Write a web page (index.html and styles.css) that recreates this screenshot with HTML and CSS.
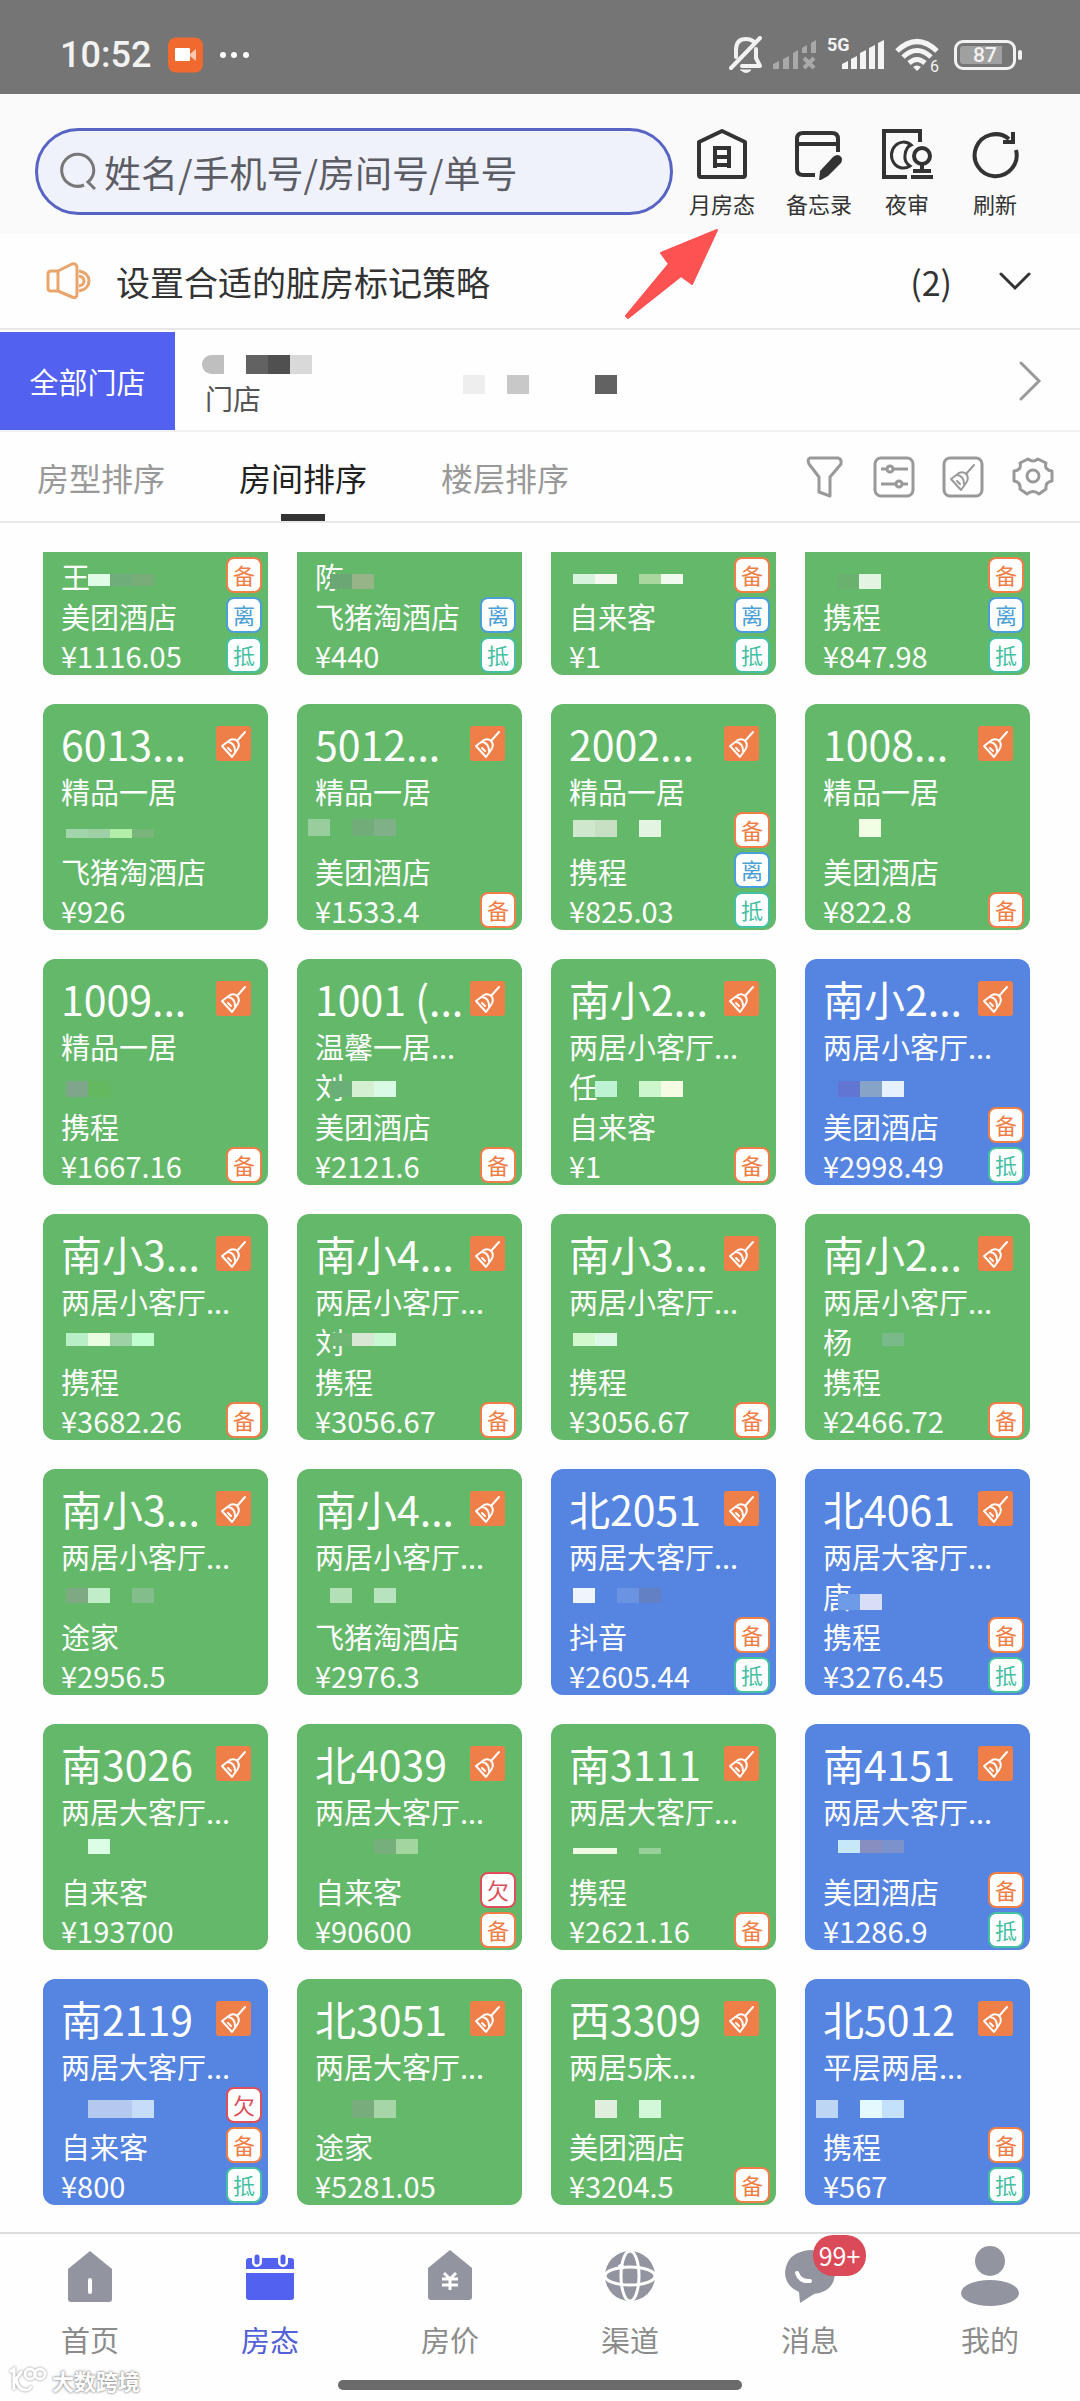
FILE: index.html
```html
<!DOCTYPE html>
<html lang="zh-CN">
<head>
  <meta charset="UTF-8">
  <meta name="viewport" content="width=device-width, initial-scale=1.0">
  <title>房态</title>
  <link rel="stylesheet" href="styles.css">
</head>
<body>

  <!-- 共用图标 -->
  <svg class="defs" width="0" height="0" aria-hidden="true">
    <symbol id="broom" viewBox="0 0 35 35">
      <g fill="none" stroke="currentColor" stroke-width="2" stroke-linecap="round" stroke-linejoin="round">
        <path d="M29 6 L21 15"/>
        <path d="M6 20 L14 14 Q19 12 22 16 Q24 20 21 24 L16 31 Z"/>
        <path d="M12 16 Q19 17 19 25 M12 22 L15 25"/>
      </g>
    </symbol>
  </svg>

  <div class="status-bar">
    <span class="time">10:52</span>
    <svg class="rec" width="36" height="36" viewBox="0 0 36 36">
      <rect width="35" height="35" y="0.5" rx="8" fill="#f06a30"/>
      <rect x="7" y="11" width="15" height="13" rx="1" fill="#fff"/>
      <path d="M22 17 L28 12 V24 L22 19 Z" fill="#fbc9b0"/>
    </svg>
    <svg width="30" height="8" viewBox="0 0 30 8" fill="#fff">
      <circle cx="4" cy="4" r="3"/><circle cx="15" cy="4" r="3"/><circle cx="27" cy="4" r="3"/>
    </svg>
    <div class="status-right">
      <svg width="34" height="38" viewBox="0 0 34 38" fill="none" stroke="#f2f2f2" stroke-width="4" stroke-linecap="round" stroke-linejoin="round">
        <path d="M31 2 L2 32"/>
        <path d="M7 21 V14 Q7 3 17 3 Q21 3 24 5"/>
        <path d="M27 13 V22 L31 30 H13"/>
        <path d="M12 34 H22 Q17 39 12 34 Z" fill="#f2f2f2" stroke-width="1"/>
      </svg>
      <svg width="44" height="30" viewBox="0 0 44 30" fill="#a9a9a9">
        <path d="M0 24 l6 -3 v8 h-6 Z M10 19 l6 -3 v13 h-6 Z M20 13 l5 -3 v19 h-5 Z M29 8 l5 -3 v8 h-5 Z M38 3 l5 -3 v13 h-5 Z"/>
        <path d="M31 18 L41 28 M41 18 L31 28" stroke="#a9a9a9" stroke-width="4"/>
      </svg>
      <div class="cell">
        <span>5G</span>
        <svg width="44" height="30" viewBox="0 0 44 30" fill="#f4f4f4">
          <path d="M1 24 l6 -3 v8 h-6 Z M10 19 l6 -3 v13 h-6 Z M19 13 l6 -3 v19 h-6 Z M28 8 l6 -3 v24 h-6 Z M37 3 l6 -3 v29 h-6 Z"/>
        </svg>
      </div>
      <div class="wifi">
        <svg width="44" height="34" viewBox="0 0 44 34" fill="none" stroke="#f4f4f4" stroke-width="5">
          <path d="M2 13 Q22 -6 42 13"/>
          <path d="M8 19 Q22 6 36 19"/>
          <path d="M14 25 Q22 18 30 25"/>
          <path d="M18 29 Q22 26 26 29 L22 33 Z" fill="#f4f4f4" stroke="none"/>
        </svg>
        <span>6</span>
      </div>
      <div class="battery"><span>87</span></div>
    </div>
  </div>

  <header class="top">
    <label class="search">
      <svg width="38" height="40" viewBox="0 0 38 40" fill="none" stroke="#777" stroke-width="3">
        <path d="M24 33 A16 16 0 1 1 33 23 Q31 28 28 30 L35 37"/>
      </svg>
      <input type="text" aria-label="搜索" placeholder="姓名/手机号/房间号/单号">
    </label>
    <div class="actions">
      <button>
        <svg width="52" height="52" viewBox="0 0 52 52" fill="none" stroke="#333" stroke-width="4" stroke-linejoin="round">
          <path d="M3 14 L26 3 L49 14 V47 Q49 49 47 49 H5 Q3 49 3 47 Z"/>
          <path d="M19 40 V20 H33 V40 M19 29 H33 M19 37 H33" stroke-linejoin="miter"/>
        </svg>
        月房态
      </button>
      <button>
        <svg width="52" height="52" viewBox="0 0 52 52" fill="none" stroke="#333" stroke-width="4">
          <path d="M22 47 H10 Q4 47 4 41 V11 Q4 5 10 5 H39 Q45 5 45 11 V24 M4 16 H45"/>
          <path d="M45 27 Q51 29 48 35 L35 48 L26 53 L27 43 L40 29 Q42 27 45 27 Z" fill="#333" stroke="none"/>
        </svg>
        备忘录
      </button>
      <button>
        <svg width="52" height="52" viewBox="0 0 52 52" fill="none" stroke="#333" stroke-width="4">
          <path d="M26 49 H3 V3 H39 V14"/>
          <path d="M30 17 A12 13 0 1 0 29 38 Q23 34 24 27 Q25 19 30 17 Z" stroke-width="3"/>
          <circle cx="41" cy="28" r="8"/>
          <path d="M41 36 V43 M32 43 H50 M30 49 H52"/>
        </svg>
        夜审
      </button>
      <button>
        <svg width="52" height="52" viewBox="0 0 52 52" fill="none" stroke="#333" stroke-width="4">
          <path d="M47 22 A21 21 0 1 1 40 11"/>
          <path d="M44 4 V14 H34"/>
        </svg>
        刷新
      </button>
    </div>
    <!-- 指向“月房态”的箭头 -->
    <svg class="pointer" width="94" height="92" viewBox="0 0 94 92">
      <path d="M92 2 L67 56 L56 48 L3 90 L1 88 L44 36 L36 25 Z" fill="#fc5252" stroke="#fc5252" stroke-width="2" stroke-linejoin="round"/>
    </svg>
  </header>

  <section class="notice">
    <svg width="46" height="38" viewBox="0 0 46 38" fill="none" stroke="#e9a56c" stroke-width="3" stroke-linejoin="round">
      <path d="M12 9 L26 2 Q31 1 31 6 V32 Q31 37 26 35 L12 29 H5 Q2 29 2 26 V12 Q2 9 5 9 Z M12 9 V29"/>
      <path d="M33 9 Q43 11 43 19 Q43 27 33 29 M33 14 Q38 15 38 19 Q38 23 33 24"/>
    </svg>
    <p>设置合适的脏房标记策略</p>
    <span class="count">(2)</span>
    <button aria-label="展开">
      <svg width="34" height="20" viewBox="0 0 34 20" fill="none" stroke="#333" stroke-width="3" stroke-linecap="round"><path d="M3 3 L17 17 L31 3"/></svg>
    </button>
  </section>

  <section class="stores">
    <button class="store-all">全部门店</button>
    <div class="store-name">
      <span class="mosaic-row"><i class="m1"></i><i></i><i class="m2"></i><i class="m3"></i><i class="m4"></i></span>
      <span>门店</span>
    </div>
    <span class="mosaic-row second"><i class="m5"></i><i></i><i class="m6"></i><i></i><i></i><i></i><i class="m2"></i></span>
    <button class="store-more" aria-label="更多门店">
      <svg width="24" height="42" viewBox="0 0 24 42" fill="none" stroke="#999" stroke-width="3" stroke-linecap="round"><path d="M3 3 L21 21 L3 39"/></svg>
    </button>
  </section>

  <nav class="tabs">
    <button>房型排序</button>
    <button class="active">房间排序</button>
    <button>楼层排序</button>
    <div class="tools">
      <button aria-label="筛选">
        <svg width="42" height="42" viewBox="0 0 42 42"><path d="M6 2 H34 Q38 3 37 8 L26 21 V40 L15 36 V21 L5 8 Q3 3 6 2 Z"/></svg>
      </button>
      <button aria-label="设置项">
        <svg width="42" height="42" viewBox="0 0 42 42"><rect x="2" y="2" width="38" height="38" rx="6"/><path d="M8 13 H13 M20 13 H35 M8 28 H22 M29 28 H35"/><circle cx="17" cy="13" r="3"/><circle cx="26" cy="28" r="3"/></svg>
      </button>
      <button aria-label="脏房">
        <svg width="42" height="42" viewBox="0 0 42 42"><rect x="2" y="2" width="38" height="38" rx="6"/><use href="#broom" x="3" y="3" width="35" height="35"/></svg>
      </button>
      <button aria-label="设置">
        <svg width="44" height="42" viewBox="0 0 44 42"><path d="M17 3 Q22 7 27 3 L35 7 Q33 14 41 15 V25 Q34 26 35 33 L28 38 Q22 33 16 38 L9 33 Q10 26 3 25 V15 Q11 14 9 7 Z"/><circle cx="22" cy="20" r="6"/></svg>
      </button>
    </div>
  </nav>

  <main class="rooms" id="rooms"></main>

  <footer class="tabbar">
    <a href="#">
      <svg width="56" height="60" viewBox="0 0 56 60"><path d="M28 5 L50 23 V53 Q50 56 47 56 H9 Q6 56 6 53 V23 Z"/><path d="M28 34 V46" stroke="#fff" stroke-width="4" stroke-linecap="round"/></svg>
      首页
    </a>
    <a href="#" class="current">
      <svg width="56" height="60" viewBox="0 0 56 60"><path d="M4 23 V15 Q4 12 7 12 H49 Q52 12 52 15 V23 Z M4 27 H52 V51 Q52 54 49 54 H7 Q4 54 4 51 Z"/><path d="M15 11 V16 M41 11 V16" stroke="#fff" stroke-width="10" stroke-linecap="round"/><path d="M15 11 V16 M41 11 V16" stroke="#5261ef" stroke-width="5" stroke-linecap="round"/></svg>
      房态
    </a>
    <a href="#">
      <svg width="56" height="60" viewBox="0 0 56 60"><path d="M28 4 L50 22 V51 Q50 54 47 54 H9 Q6 54 6 51 V22 Z"/><path d="M22 27 L28 33 L34 27 M28 33 V44 M20 33 H36 M20 39 H36" fill="none" stroke="#fff" stroke-width="3"/></svg>
      房价
    </a>
    <a href="#">
      <svg width="56" height="60" viewBox="0 0 56 60"><circle cx="28" cy="30" r="25"/><g fill="none" stroke="#fff" stroke-width="3"><ellipse cx="28" cy="30" rx="25" ry="9"/><ellipse cx="28" cy="30" rx="9" ry="25"/></g><circle cx="19" cy="21" r="3" fill="#fff"/></svg>
      渠道
    </a>
    <a href="#">
      <svg width="56" height="60" viewBox="0 0 56 60"><path d="M28 4 Q53 5 53 27 Q52 46 32 48 L18 57 L17 46 Q3 40 3 26 Q5 6 28 4 Z"/><path d="M15 27 Q18 36 28 35" fill="none" stroke="#fff" stroke-width="4" stroke-linecap="round"/></svg>
      消息
      <span class="unread">99+</span>
    </a>
    <a href="#">
      <svg width="60" height="62" viewBox="0 0 60 62"><circle cx="30" cy="15" r="15"/><ellipse cx="30" cy="47" rx="29" ry="13"/></svg>
      我的
    </a>
  </footer>

  <div class="system-bar">
    <div class="watermark">
      <svg width="40" height="28" viewBox="0 0 40 28" fill="none" stroke="#fff" stroke-width="3">
        <path d="M2 6 L6 3 V24 M14 5 L8 13 Q10 24 18 24 Q22 24 23 20"/><circle cx="22" cy="8" r="5"/><circle cx="32" cy="8" r="5"/>
      </svg>
      大数跨境
    </div>
    <div class="home-line"></div>
  </div>

  <script src="script.js"></script>
</body>
</html>
```
FILE: styles.css
```css
* {
  margin: 0;
  padding: 0;
  box-sizing: border-box;
}

body {
  display: flex;
  flex-direction: column;
  min-height: 100vh;
  background: #fefefe;
  color: #333;
  font-family: "Noto Sans CJK SC", "Noto Sans", sans-serif;
  font-size: 29px;
}

button {
  border: none;
  background: none;
  color: inherit;
  font: inherit;
  white-space: nowrap;
}

a {
  color: inherit;
  text-decoration: none;
}

svg {
  display: block;
  flex-shrink: 0;
}

.defs {
  position: absolute;
}

/* 状态栏 */
.status-bar {
  display: flex;
  align-items: center;
  height: 94px;
  padding: 16px 58px 0 60px;
  background: #757575;
  color: #f2f2f2;
  font-family: Roboto, sans-serif;
}

.time {
  width: 108px;
  font-size: 36px;
  font-weight: 500;
}

.rec {
  margin-right: 15px;
}

.status-right {
  display: flex;
  align-items: center;
  gap: 10px;
  margin-left: auto;
}

.cell,
.wifi {
  position: relative;
}

.cell {
  padding-left: 14px;
}

.cell span {
  position: absolute;
  left: 0;
  top: -6px;
  font-size: 18px;
  font-weight: 700;
}

.wifi span {
  position: absolute;
  right: 0;
  bottom: -4px;
  font-size: 16px;
  line-height: 18px;
}

.battery {
  position: relative;
  display: flex;
  align-items: center;
  justify-content: center;
  width: 62px;
  height: 30px;
  margin: 0 6px 0 5px;
  border: 3px solid #f2f2f2;
  border-radius: 9px;
  background: linear-gradient(90deg, #a0a0a0 84%, transparent 84%) content-box;
  padding: 3px;
  font-size: 21px;
  font-weight: 500;
}

.battery::after {
  content: "";
  position: absolute;
  right: -9px;
  top: 7px;
  width: 4px;
  height: 10px;
  border-radius: 2px;
  background: #f2f2f2;
}

/* 搜索和快捷操作 */
.top {
  position: relative;
  display: flex;
  align-items: flex-start;
  height: 140px;
  padding: 34px 52px 0 35px;
  background: #fafafa;
}

.search {
  flex: 1;
  display: flex;
  align-items: center;
  gap: 6px;
  height: 87px;
  padding: 0 24px 0 22px;
  border: 3px solid #5764c4;
  border-radius: 44px;
  background: #f0f2fb;
}

.search input {
  flex: 1;
  min-width: 0;
  border: none;
  outline: none;
  background: none;
  font: inherit;
  font-size: 37px;
}

.search input::placeholder {
  color: #5c5d64;
  opacity: 1;
}

.actions {
  display: flex;
  gap: 22px;
  margin-left: 16px;
}

.actions button {
  display: flex;
  flex-direction: column;
  align-items: center;
  gap: 7px;
  min-width: 66px;
  font-size: 22px;
  line-height: 32px;
}

.actions button:first-child {
  margin-right: 9px;
}

.pointer {
  position: absolute;
  left: 625px;
  top: 134px;
  z-index: 1;
}

/* 通知 */
.notice {
  display: flex;
  align-items: center;
  height: 96px;
  padding: 0 48px 0 46px;
  border-bottom: 2px solid #e8e8e8;
  font-size: 34px;
}

.notice p {
  flex: 1;
  margin-left: 24px;
}

.count {
  margin-right: 46px;
}

/* 门店 */
.stores {
  display: flex;
  align-items: center;
  padding: 2px 38px 0 0;
  border-bottom: 2px solid #f1f1f1;
}

.store-all {
  width: 175px;
  height: 98px;
  background: #5261ef;
  color: #fff;
}

.store-name {
  display: flex;
  flex-direction: column;
  gap: 6px;
  width: 236px;
  padding-top: 8px;
  margin-left: 27px;
  color: #555;
  font-size: 28px;
  line-height: 36px;
}

.store-name > span:last-child {
  margin-left: 3px;
}

.mosaic-row {
  display: flex;
}

.mosaic-row i {
  width: 22px;
  height: 19px;
}

.second {
  margin: 6px 0 0 25px;
}

.mosaic-row .m1 { background: #bfbfbf; border-radius: 10px 0 0 10px; }
.mosaic-row .m2 { background: #626262; }
.mosaic-row .m3 { background: #505050; }
.mosaic-row .m4 { background: #d9d9d9; }
.mosaic-row .m5 { background: #eee; }
.mosaic-row .m6 { background: #c8c8c8; }

.store-more {
  margin-left: auto;
}

/* 排序 */
.tabs {
  display: flex;
  align-items: stretch;
  gap: 74px;
  height: 91px;
  padding: 0 25px 0 37px;
  border-bottom: 2px solid #e8e8e8;
  color: #999;
  font-size: 32px;
}

.tabs .active {
  position: relative;
  color: #222;
}

.tabs .active::after {
  content: "";
  position: absolute;
  left: 42px;
  bottom: 0;
  width: 44px;
  height: 7px;
  background: #333;
}

.tools {
  display: flex;
  align-items: center;
  gap: 27px;
  margin-left: auto;
}

.tools svg {
  fill: none;
  stroke: #999;
  stroke-width: 3;
  stroke-linejoin: round;
}

.tools use {
  color: #999;
}

/* 房间 */
.rooms {
  flex: 1;
  display: grid;
  grid-template-columns: repeat(4, 1fr);
  align-content: start;
  gap: 29px;
  padding: 29px 50px 27px 43px;
}

.room {
  position: relative;
  min-width: 0;
  padding: 15px 0 0 18px;
  border-radius: 12px;
  background: #64b869;
  color: #fff;
  line-height: 40px;
  white-space: nowrap;
}

.room.booked {
  background: #5584e1;
}

/* 滚动时被截掉上半部分的一行 */
.room.cut {
  padding-top: 4px;
  border-radius: 0 0 12px 12px;
}

.room h2 {
  display: flex;
  align-items: center;
  justify-content: space-between;
  margin-bottom: 4px;
  padding-right: 17px;
  font-size: 41px;
  font-weight: 400;
  line-height: 48px;
}

.dirty {
  width: 35px;
  height: 35px;
  border-radius: 3px;
  background: #ee7f48;
}

.guest {
  position: relative;
  height: 40px;
}

.mosaic {
  position: absolute;
  display: flex;
  margin-top: 2px;
}

.mosaic i {
  width: 22px;
}

.price {
  line-height: 39px;
}

.marks {
  position: absolute;
  right: 6px;
  bottom: 2px;
  display: flex;
  flex-direction: column;
  gap: 4px;
}

.mark {
  width: 36px;
  height: 36px;
  border: 2px solid;
  border-radius: 8px;
  background: #fff;
  font-size: 22px;
  line-height: 31px;
  text-align: center;
}

.note { color: #ee7f48; }
.leave { color: #4b9fd6; }
.offset { color: #45c0a2; }
.owe { color: #dc4f5a; }

/* 底部导航 */
.tabbar {
  display: grid;
  grid-template-columns: repeat(6, 1fr);
  padding-top: 12px;
  border-top: 2px solid #dcdcdc;
  color: #8c8c8c;
}

.tabbar a {
  position: relative;
  display: flex;
  flex-direction: column;
  align-items: center;
  justify-content: space-between;
  height: 114px;
  line-height: 42px;
}

.tabbar svg {
  fill: #92959f;
}

.tabbar .current {
  color: #5261d8;
}

.tabbar .current svg {
  fill: #5261ef;
}

.unread {
  position: absolute;
  left: 50%;
  top: -11px;
  width: 53px;
  margin-left: 3px;
  border-radius: 20px;
  background: #da4a58;
  color: #fff;
  font-size: 25px;
  line-height: 41px;
  text-align: center;
}

.system-bar {
  position: relative;
  display: flex;
  justify-content: center;
  height: 41px;
  padding-top: 20px;
}

.home-line {
  width: 404px;
  height: 10px;
  border-radius: 5px;
  background: #6a6a6a;
}

.watermark {
  position: absolute;
  left: 8px;
  top: 5px;
  display: flex;
  align-items: center;
  gap: 4px;
  color: #fff;
  font-size: 22px;
  font-weight: 700;
  line-height: 30px;
  text-shadow: 0 0 3px #888, 0 0 2px #999;
}

.watermark svg {
  filter: drop-shadow(0 0 1px #888);
}
```
FILE: script.js
```js
var MARKS = {
  '备': 'note',
  '离': 'leave',
  '抵': 'offset',
  '欠': 'owe'
};

// no, type, guest, channel, price, marks, mosaic [x, y, height, colors], booked
var rooms = [
  ['', '', '王', '美团酒店', '1116.05', '备离抵', [27, 16, 12, '#e0fbe6 #6fae7a #78ad7a']],
  ['', '', '陈', '飞猪淘酒店', '440', '离抵', [15, 16, 15, '#6aa775 #97b488']],
  ['', '', '', '自来客', '1', '备离抵', [4, 16, 10, '#d5f3dd #f4f9f0 - #a9d79d #f2f9ee']],
  ['', '', '', '携程', '847.98', '备离抵', [14, 16, 15, '#6ab16f #e3f5e2']],

  ['6013...', '精品一居', '', '飞猪淘酒店', '926', '', [5, 16, 9, '#a3d5ac #9fcfa5 #b4efaa #78b57a']],
  ['5012...', '精品一居', '', '美团酒店', '1533.4', '备', [-7, 6, 17, '#98ce9e - #72ad79 #7fb088']],
  ['2002...', '精品一居', '', '携程', '825.03', '备离抵', [4, 7, 17, '#cfe8cd #c7dfc3 - #e3f5e2']],
  ['1008...', '精品一居', '', '美团酒店', '822.8', '备', [36, 6, 18, '#f1fee3']],

  ['1009...', '精品一居', '', '携程', '1667.16', '备', [5, 13, 16, '#7fa68b #64b860']],
  ['1001 (...', '温馨一居...', '刘', '美团酒店', '2121.6', '备', [15, 13, 16, '#6aae78 #d5efd3 #d9fbe6']],
  ['南小2...', '两居小客厅...', '任', '自来客', '1', '备', [26, 13, 16, '#bdf3d2 - #cdf6cd #f6fbe3']],
  ['南小2...', '两居小客厅...', '', '美团酒店', '2998.49', '备抵', [15, 13, 16, '#6375d3 #88a3c8 #e5f1fd'], true],

  ['南小3...', '两居小客厅...', '', '携程', '3682.26', '备', [5, 10, 13, '#b9efc6 #e9fde0 #9cd2a4 #c0fdcf']],
  ['南小4...', '两居小客厅...', '刘', '携程', '3056.67', '备', [15, 10, 13, '#6fb573 #d7e7d3 #c8f8d0']],
  ['南小3...', '两居小客厅...', '', '携程', '3056.67', '备', [4, 10, 13, '#d4f8cd #dbf9e4']],
  ['南小2...', '两居小客厅...', '杨', '携程', '2466.72', '备', [59, 10, 13, '#7ab98a']],

  ['南小3...', '两居小客厅...', '', '途家', '2956.5', '', [5, 10, 15, '#7ea982 #c1eec8 - #84bd8c']],
  ['南小4...', '两居小客厅...', '', '飞猪淘酒店', '2976.3', '', [15, 10, 15, '#b4e0b8 - #b7e3be']],
  ['北2051', '两居大客厅...', '', '抖音', '2605.44', '备抵', [4, 10, 15, '#f0f5fb - #6a93e2 #6480c4'], true],
  ['北4061', '两居大客厅...', '唐', '携程', '3276.45', '备抵', [15, 16, 16, '#6d9be8 #d8def6'], true],

  ['南3026', '两居大客厅...', '', '自来客', '193700', '', [27, 6, 15, '#dcfde6']],
  ['北4039', '两居大客厅...', '', '自来客', '90600', '欠备', [59, 6, 15, '#76ae7c #a2d59f']],
  ['南3111', '两居大客厅...', '', '携程', '2621.16', '备', [4, 15, 6, '#f0fbe3 #f0fbe3 - #97d09b']],
  ['南4151', '两居大客厅...', '', '美团酒店', '1286.9', '备抵', [15, 7, 13, '#c6e8f7 #888fc0 #7b92cc'], true],

  ['南2119', '两居大客厅...', '', '自来客', '800', '欠备抵', [27, 12, 18, '#b5c9ee #b5c9ee #c6dcf8'], true],
  ['北3051', '两居大客厅...', '', '途家', '5281.05', '', [37, 12, 18, '#78ac7d #a6d5a8']],
  ['西3309', '两居5床...', '', '美团酒店', '3204.5', '备', [26, 12, 18, '#e0efdd - #d3f7d9']],
  ['北5012', '平层两居...', '', '携程', '567', '备抵', [-7, 12, 18, '#bcd6f3 - #e3f9fd #c4e1fb'], true]
];

function mosaic(m) {
  var cells = m[3].split(' ').map(function (c) {
    return c === '-' ? '<i></i>' : '<i style="background:' + c + '"></i>';
  }).join('');
  return '<span class="mosaic" style="left:' + m[0] + 'px;top:' + m[1] + 'px;height:' + m[2] + 'px">' + cells + '</span>';
}

function roomCard(r) {
  var html = '<article class="room' + (r[7] ? ' booked' : '') + (r[0] ? '' : ' cut') + '">';
  if (r[0]) {
    html += '<h2>' + r[0] + '<svg class="dirty"><use href="#broom"/></svg></h2>';
    html += '<p>' + r[1] + '</p>';
  }
  html += '<p class="guest">' + r[2] + mosaic(r[6]) + '</p>';
  html += '<p>' + r[3] + '</p>';
  html += '<p class="price">¥' + r[4] + '</p>';
  html += '<div class="marks">' + r[5].split('').map(function (k) {
    return '<span class="mark ' + MARKS[k] + '">' + k + '</span>';
  }).join('') + '</div>';
  return html + '</article>';
}

document.getElementById('rooms').innerHTML = rooms.map(roomCard).join('');
```
